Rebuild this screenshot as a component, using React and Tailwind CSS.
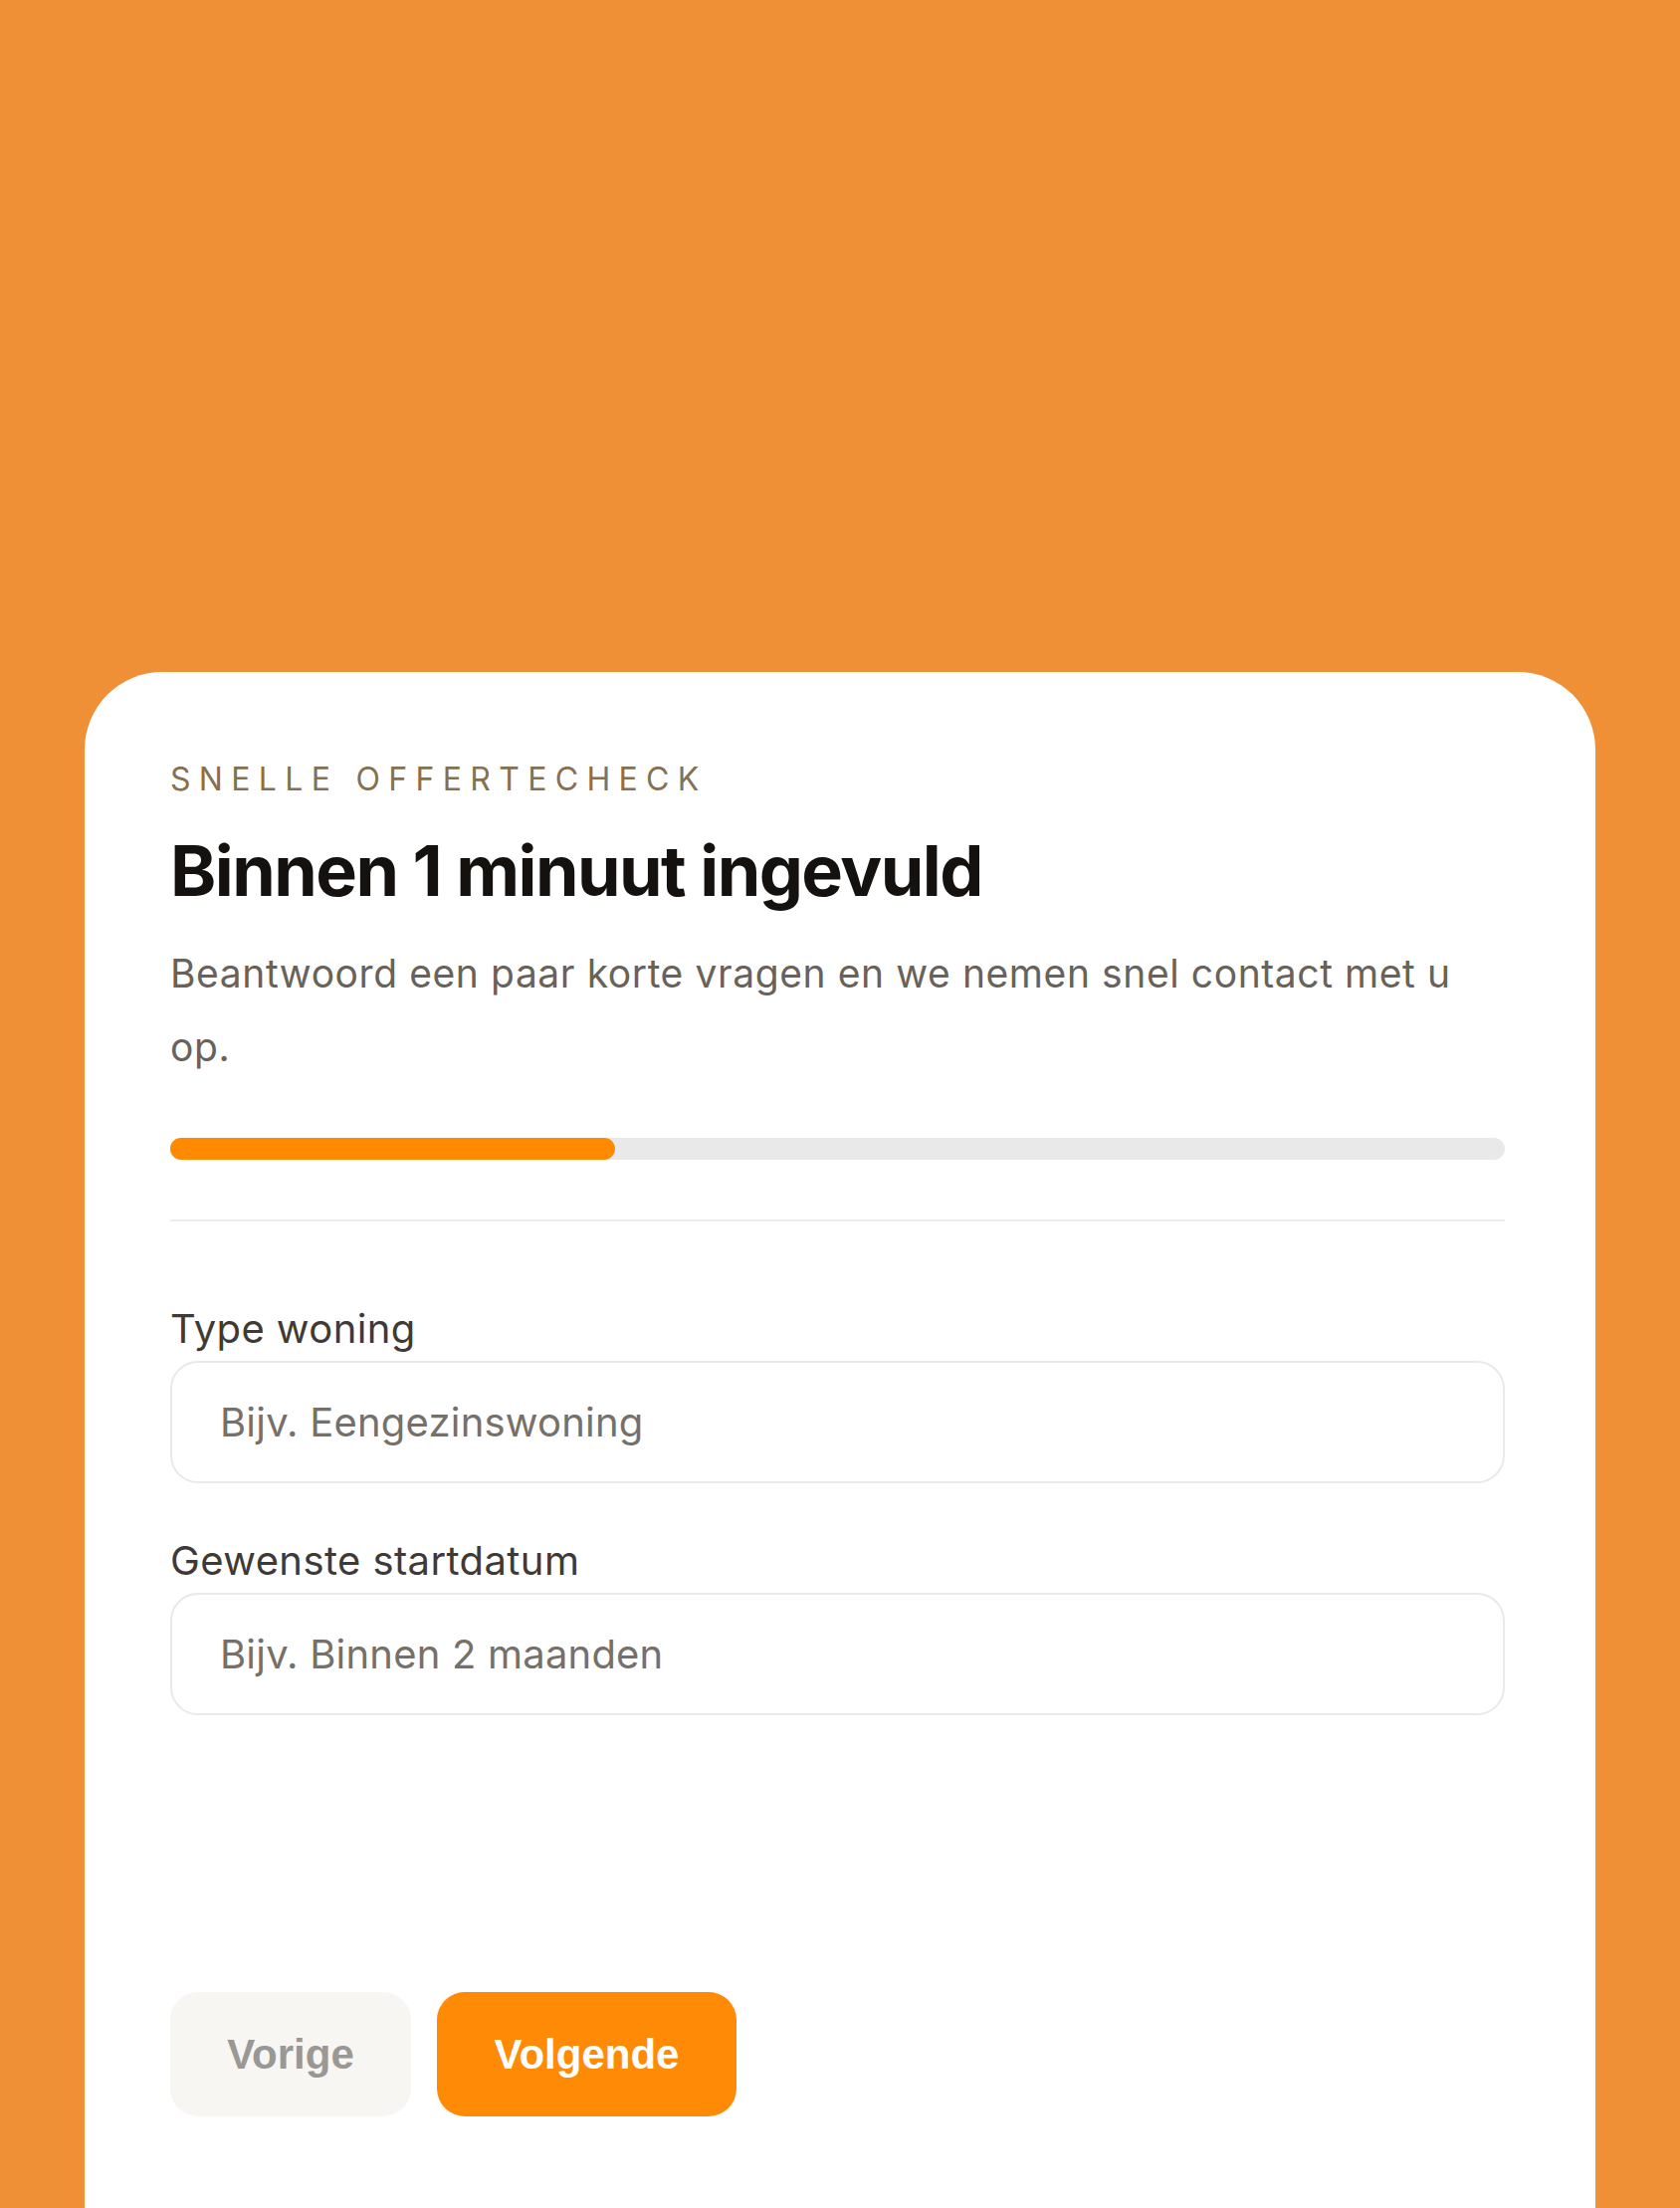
import React from 'react';

const Field = ({ label, placeholder }) => (
  <label className="flex flex-col">
    <span className="text-[40px] leading-[1.3] text-[#3f3a35] tracking-[0.01em]">{label}</span>
    <input
      type="text"
      placeholder={placeholder}
      className="mt-[6px] h-[123px] w-full rounded-[28px] border-2 border-[#ebe9e6] bg-white px-[48px] text-[40px] tracking-[0.005em] text-[#3f3a35] placeholder:text-[#76706a] outline-none"
    />
  </label>
);

export default function App() {
  return (
    <div
      className="h-[2218px] overflow-hidden bg-[#ef8f36] px-[85px] pt-[675px]"
      style={{ fontFamily: 'Inter, "Noto Sans", sans-serif' }}
    >
      <div className="min-h-[1600px] rounded-t-[78px] bg-white pl-[86px] pr-[91px] pt-[90px]">
        <p className="text-[32px] leading-[36px] uppercase tracking-[0.26em] text-[#86704f]">
          Snelle offertecheck
        </p>
        <h1 className="mt-[34px] text-[70px] leading-[80px] font-bold tracking-[-0.022em] text-[#15110e]">
          Binnen 1 minuut ingevuld
        </h1>
        <p className="mt-[26px] max-w-[1300px] text-[39px] leading-[74px] tracking-[0.015em] text-[#68625b]">
          Beantwoord een paar korte vragen en we nemen snel contact met u op.
        </p>

        <div className="mt-[54px] h-[22px] w-full rounded-full bg-[#e9e9e9]">
          <div className="h-full w-1/3 rounded-full bg-[#ff8a00]" />
        </div>

        <div className="mt-[60px] h-[2px] w-full bg-[#ececec]" />

        <div className="mt-[82px] flex flex-col gap-[52px]">
          <Field label="Type woning" placeholder="Bijv. Eengezinswoning" />
          <Field label="Gewenste startdatum" placeholder="Bijv. Binnen 2 maanden" />
        </div>

        <div className="mt-[278px] flex gap-[26px]" style={{ fontFamily: '"Liberation Sans", Arial, sans-serif' }}>
          <button className="h-[125px] w-[242px] rounded-[28px] bg-[#f7f6f2] text-[42px] font-bold text-[#9a9894]">
            Vorige
          </button>
          <button className="h-[125px] w-[301px] rounded-[28px] bg-[#ff8a05] text-[42px] font-bold text-white">
            Volgende
          </button>
        </div>
      </div>
    </div>
  );
}
